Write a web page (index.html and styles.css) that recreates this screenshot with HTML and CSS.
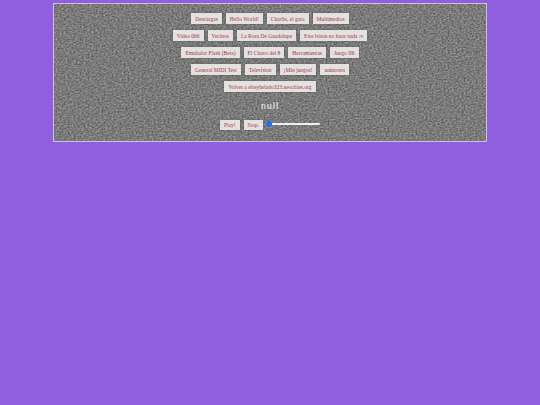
FILE: index.html
```html
<!DOCTYPE html>
<html lang="es">
<head>
<meta charset="utf-8">
<title>Inicio</title>
<link rel="stylesheet" href="styles.css">
</head>
<body>
<main class="panel">
  <svg class="texture" aria-hidden="true" width="100%" height="100%">
    <filter id="grain" x="0" y="0" width="100%" height="100%" color-interpolation-filters="sRGB">
      <feTurbulence type="fractalNoise" baseFrequency="0.5 0.65" numOctaves="2" seed="4"/>
      <feColorMatrix type="matrix" values="0.42 0 0 0 0.27  0.42 0 0 0 0.27  0.42 0 0 0 0.27  0 0 0 0 1"/>
    </filter>
    <rect width="100%" height="100%" fill="#777777"/>
    <rect width="100%" height="100%" filter="url(#grain)"/>
  </svg>
  <div class="content">
    <nav class="row"><a class="btn">Descargas</a><a class="btn">Hello World!</a><a class="btn">Charlie, el gato</a><a class="btn">Multimedios</a></nav>
    <nav class="row"><a class="btn">Video 066</a><a class="btn">Vecinos</a><a class="btn">La Rosa De Guadalupe</a><a class="btn">Este bóton no hace nada :v</a></nav>
    <nav class="row"><a class="btn">Emulador Flash (Beta)</a><a class="btn">El Chavo del 8</a><a class="btn">Herramientas</a><a class="btn">Juego II6</a></nav>
    <nav class="row"><a class="btn">General MIDI Test</a><a class="btn">Television</a><a class="btn">¡Más juegos!</a><a class="btn">unknown</a></nav>
    <nav class="row"><a class="btn">Volver a elreyhelado323.neocities.org</a></nav>
    <p class="status">null</p>
    <div class="player">
      <button class="btn" type="button">Play!</button>
      <button class="btn" type="button">Stop.</button>
      <input class="volume" type="range" min="0" max="100" value="0" aria-label="Volumen">
    </div>
  </div>
</main>
</body>
</html>
```
FILE: styles.css
```css
html, body {
  margin: 0;
  height: 100%;
}
body {
  background: #8f5fdf;
  font-family: "Liberation Serif", serif;
  overflow: hidden;
}
.panel {
  position: relative;
  box-sizing: border-box;
  width: 434px;
  height: 139px;
  margin: 3px 0 0 53px;
  border: 1px solid #c9c4d4;
  overflow: hidden;
}
.texture {
  position: absolute;
  inset: 0;
}
.content {
  position: relative;
  display: flex;
  flex-direction: column;
  align-items: center;
  padding-top: 9px;
}
.row {
  display: flex;
  justify-content: center;
  gap: 4px;
  height: 11px;
  margin-bottom: 6px;
}
.btn {
  display: flex;
  align-items: center;
  box-sizing: border-box;
  height: 11px;
  padding: 0 4px;
  border: 0;
  background: #e4e1e1;
  box-shadow: 0 0 2px rgba(60, 60, 60, 0.5);
  color: #a03a42;
  font-family: "Liberation Serif", serif;
  font-size: 5.5px;
  white-space: nowrap;
}
.status {
  margin: 1px 0 0;
  height: 14px;
  line-height: 14px;
  color: #d8d8d8;
  font-family: "Liberation Sans", sans-serif;
  font-size: 8.5px;
  font-weight: bold;
  letter-spacing: 0.8px;
}
.player {
  display: flex;
  align-items: center;
  gap: 4px;
  height: 11px;
  margin-top: 6px;
}
.player .btn {
  height: 10px;
}
.volume {
  appearance: none;
  -webkit-appearance: none;
  width: 54px;
  height: 8px;
  margin: 0 0 2px -1px;
  background: transparent;
}
.volume::-webkit-slider-runnable-track {
  height: 2px;
  border-radius: 1px;
  background: #efefef;
}
.volume::-webkit-slider-thumb {
  -webkit-appearance: none;
  width: 6px;
  height: 6px;
  margin-top: -2px;
  border-radius: 50%;
  background: #1a73f0;
}
```
